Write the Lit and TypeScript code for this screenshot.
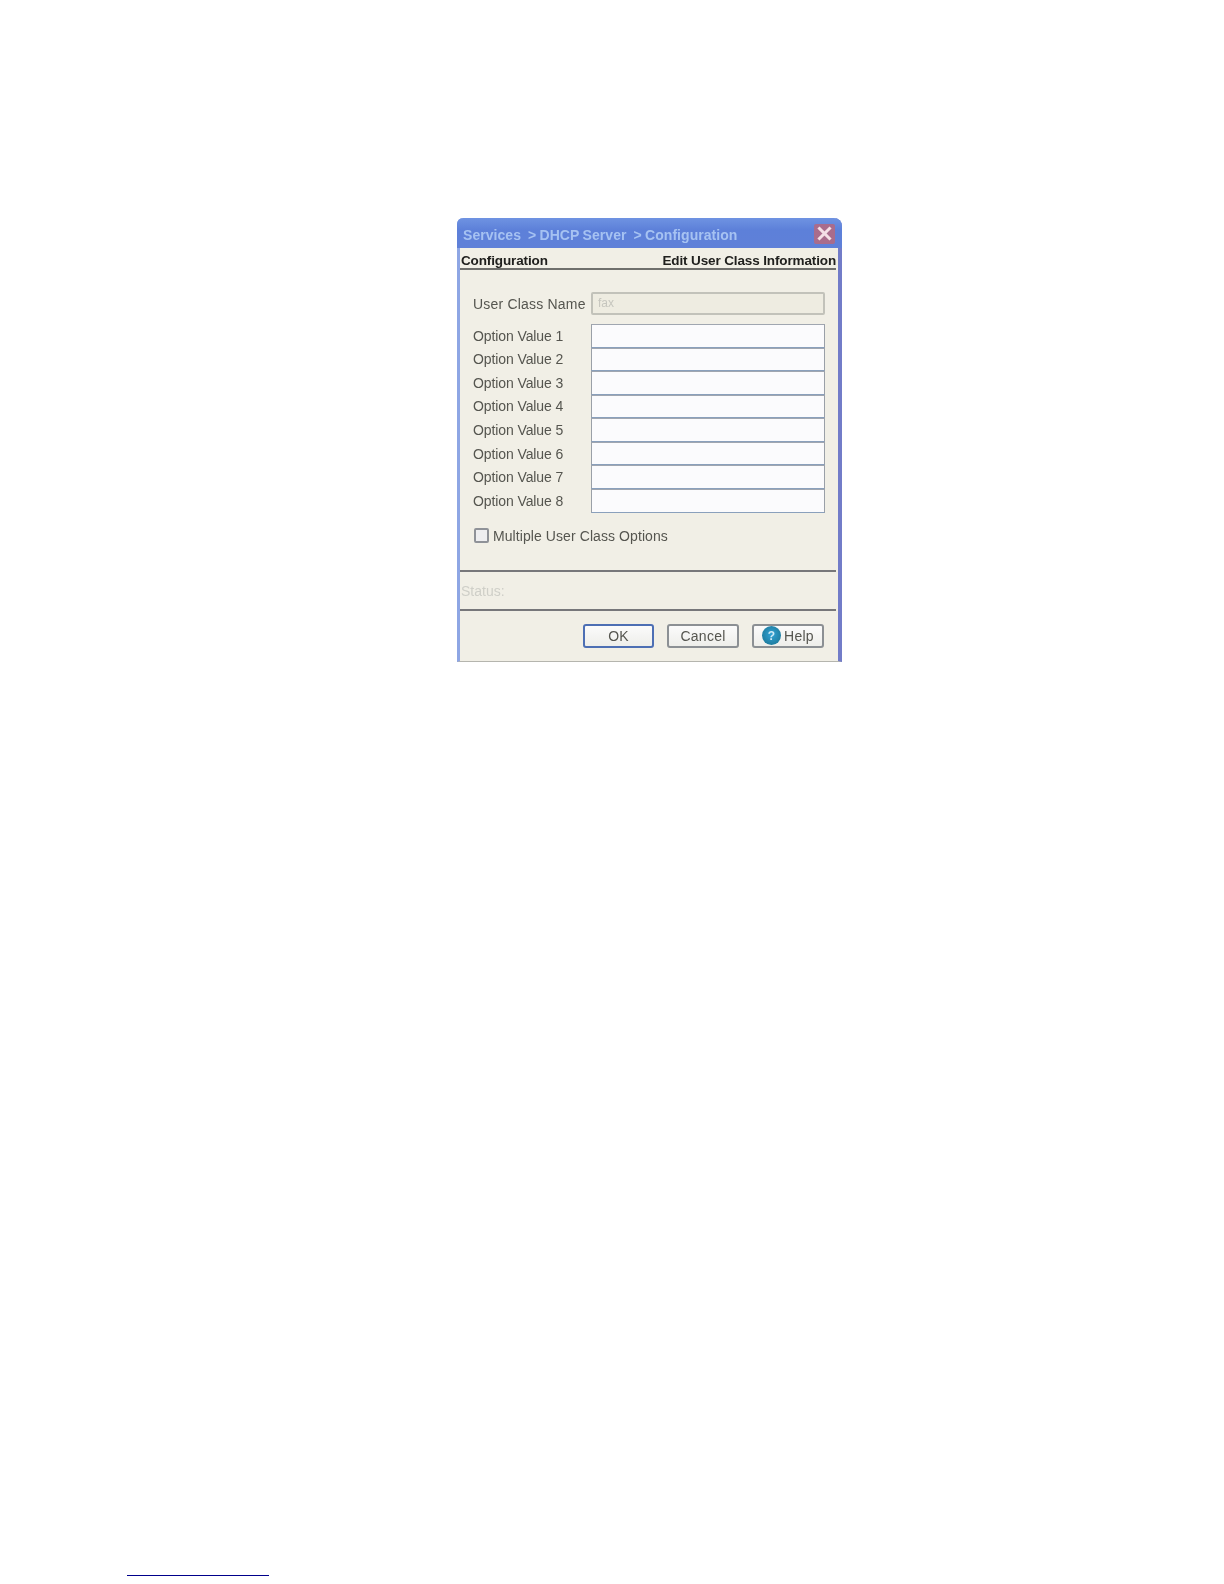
import { LitElement, html, css } from "lit";
import { customElement } from "lit/decorators.js";

@customElement("app-root")
export class AppRoot extends LitElement {
  static styles = css`
    :host { display: block; width: 1224px; height: 1584px; background: #fff; overflow: hidden;
      font-family: "Liberation Sans", Arial, sans-serif; color: #55554f; box-sizing: border-box; padding-top: 218px; }
    .dialog { box-sizing: border-box; width: 385px; height: 444px; margin-left: 457px; display: flex; flex-direction: column;
      background: #f1efe6; border-radius: 6px 8px 0 0; filter: blur(0.55px);
      border-left: 3px solid #8ea6e4; border-right: 4px solid #727cc8; border-bottom: 1px solid #b5b5ae; }
    .title { height: 30px; flex: none; margin: 0 -4px 0 -3px; padding: 0 7px 0 6px; display: flex; align-items: center; justify-content: space-between;
      background: linear-gradient(#6f93e2, #5d80d9 40%, #5f80d8); border-radius: 6px 8px 0 0; }
    .title span { font-weight: bold; font-size: 14px; letter-spacing: 0.05px; word-spacing: -0.5px; color: #a6c2f2; white-space: pre; padding-top: 3px; }
    .close { width: 21px; height: 20px; background: #a96c8c; display: flex; align-items: center; justify-content: center; border-radius: 2px; margin-top: 1px; }
    .close svg { width: 15px; height: 15px; display: block; }
    .head { height: 22px; flex: none; margin-right: 2px; border-bottom: 2px solid #6f6f6c; display: flex; align-items: center; justify-content: space-between;
      font-weight: bold; font-size: 13.5px; letter-spacing: -0.13px; color: #20201e; padding: 5px 0 0 1px; box-sizing: border-box; }
    .form { padding: 21px 0 0 13px; }
    .row { display: flex; align-items: center; }
    .row label { width: 118px; font-size: 14px; white-space: nowrap; flex: none; }
    .name label { letter-spacing: 0.2px; padding-top: 3px; }
    .opt label { letter-spacing: -0.1px; }
    .field { box-sizing: border-box; width: 234px; background: #fbfbfd; border: 1px solid #9aa0a8; border-top-color: #a0a6b0; border-bottom-color: #8aa0bc; }
    .name { height: 23px; margin-bottom: 10px; }
    .name .field { height: 23px; margin-top: 1px; background: #eeece1; border: 2px solid #c2c2ba; border-radius: 2px; font-size: 12px; color: #c6c6be; padding-left: 5px; line-height: 18px; }
    .opt { height: 23.57px; }
    .opt .field { height: 23.57px; }
    .check { margin-top: 15px; display: flex; align-items: center; gap: 4px; padding-left: 1px; font-size: 14px; letter-spacing: 0.08px; }
    .box { width: 15px; height: 15px; box-sizing: border-box; border: 2px solid #8f9298; background: #eeeef0; border-radius: 2px; }
    .status { margin: 26px 2px 0 0; height: 41px; box-sizing: border-box; border-top: 2px solid #77777a; border-bottom: 2px solid #77777a;
      display: flex; align-items: center; font-size: 14px; color: #cfcfc8; padding: 2px 0 0 1px; }
    .actions { display: flex; justify-content: flex-end; gap: 13px; padding: 13px 14px 0 0; }
    .btn { box-sizing: border-box; width: 72px; height: 24px; border: 2px solid #8c9094; border-radius: 3px; background: linear-gradient(#fbfbfb, #eeeeea);
      display: flex; align-items: center; justify-content: center; gap: 3px; font-size: 14px; letter-spacing: 0.25px; color: #55554f; }
    .btn.ok { width: 71px; border-color: #4d6fb4; }
    .q { width: 19px; height: 19px; border-radius: 50%; background: radial-gradient(circle at 50% 45%, #33a3d6, #1e7c9e 75%); color: #cfeaf6;
      font-size: 12px; font-weight: bold; display: flex; align-items: center; justify-content: center; }
    .foot { width: 142px; height: 1px; background: #00008b; margin: 913px 0 0 127px; }
  `;

  render() {
    const opts = [1, 2, 3, 4, 5, 6, 7, 8];
    return html`
      <div class="dialog">
        <div class="title">
          <span>Services  &gt; DHCP Server  &gt; Configuration</span>
          <div class="close">
            <svg viewBox="0 0 15 15"><path d="M2.5 2.5L12.5 12.5M12.5 2.5L2.5 12.5" stroke="#f5dfe6" stroke-width="3" stroke-linecap="square" fill="none"/></svg>
          </div>
        </div>
        <div class="head"><span>Configuration</span><span>Edit User Class Information</span></div>
        <div class="form">
          <div class="row name"><label>User Class Name</label><div class="field">fax</div></div>
          ${opts.map((n) => html`<div class="row opt"><label>Option Value ${n}</label><div class="field"></div></div>`)}
          <div class="check"><div class="box"></div><span>Multiple User Class Options</span></div>
        </div>
        <div class="status">Status:</div>
        <div class="actions">
          <div class="btn ok">OK</div>
          <div class="btn">Cancel</div>
          <div class="btn help"><span class="q">?</span>Help</div>
        </div>
      </div>
      <div class="foot"></div>
    `;
  }
}
